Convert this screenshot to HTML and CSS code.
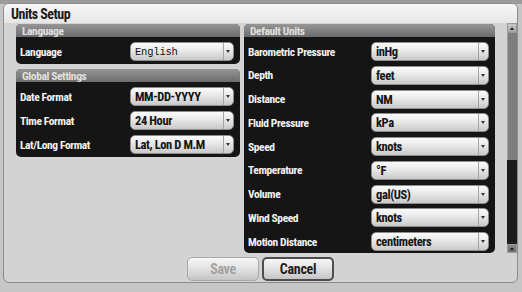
FILE: index.html
```html
<!DOCTYPE html>
<html lang="en">
<head>
  <meta charset="UTF-8" />
  <title>Units Setup</title>
  <link rel="stylesheet" href="styles.css">
</head>
<body>

  <div class="dialog">
    <div class="titlebar">Units Setup</div>

    <div class="content">
      <div class="col col-left">
        <section class="panel">
          <div class="panel-head">Language</div>
          <div class="panel-body">
            <div class="row">
              <span class="label">Language</span>
              <div class="select"><span class="value mono">English</span><span class="arrow"></span></div>
            </div>
          </div>
        </section>

        <section class="panel">
          <div class="panel-head">Global Settings</div>
          <div class="panel-body">
            <div class="row">
              <span class="label">Date Format</span>
              <div class="select"><span class="value">MM-DD-YYYY</span><span class="arrow"></span></div>
            </div>
            <div class="row">
              <span class="label">Time Format</span>
              <div class="select"><span class="value">24 Hour</span><span class="arrow"></span></div>
            </div>
            <div class="row">
              <span class="label">Lat/Long Format</span>
              <div class="select"><span class="value">Lat, Lon D M.M</span><span class="arrow"></span></div>
            </div>
          </div>
        </section>
      </div>

      <div class="col col-right">
        <section class="panel panel-units">
          <div class="panel-head">Default Units</div>
          <div class="panel-body">
            <div class="row">
              <span class="label">Barometric Pressure</span>
              <div class="select"><span class="value">inHg</span><span class="arrow"></span></div>
            </div>
            <div class="row">
              <span class="label">Depth</span>
              <div class="select"><span class="value">feet</span><span class="arrow"></span></div>
            </div>
            <div class="row">
              <span class="label">Distance</span>
              <div class="select"><span class="value">NM</span><span class="arrow"></span></div>
            </div>
            <div class="row">
              <span class="label">Fluid Pressure</span>
              <div class="select"><span class="value">kPa</span><span class="arrow"></span></div>
            </div>
            <div class="row">
              <span class="label">Speed</span>
              <div class="select"><span class="value">knots</span><span class="arrow"></span></div>
            </div>
            <div class="row">
              <span class="label">Temperature</span>
              <div class="select"><span class="value">°F</span><span class="arrow"></span></div>
            </div>
            <div class="row">
              <span class="label">Volume</span>
              <div class="select"><span class="value">gal(US)</span><span class="arrow"></span></div>
            </div>
            <div class="row">
              <span class="label">Wind Speed</span>
              <div class="select"><span class="value">knots</span><span class="arrow"></span></div>
            </div>
            <div class="row">
              <span class="label">Motion Distance</span>
              <div class="select"><span class="value">centimeters</span><span class="arrow"></span></div>
            </div>
          </div>
        </section>
      </div>

      <div class="scrollbar">
        <div class="sb-btn sb-up"></div>
        <div class="sb-thumb"></div>
        <div class="sb-track"></div>
        <div class="sb-btn sb-down"></div>
      </div>
    </div>

    <div class="buttons">
      <button class="btn" disabled>Save</button>
      <button class="btn btn-default">Cancel</button>
    </div>
  </div>

</body>
</html>
```

FILE: styles.css
```css
body {
  margin: 0;
  width: 522px;
  height: 292px;
  overflow: hidden;
  background: linear-gradient(#9c9c9c 0, #9c9c9c 4px, #c6c6c6 4px);
  font-family: "Roboto Condensed", "Open Sans", "Liberation Sans", sans-serif;
  font-stretch: condensed;
  font-weight: bold;
  letter-spacing: -0.4px;
}
.dialog {
  margin: 3px 4px 0 3px;
  width: 513px;
  border: 1px solid #8c8c8c;
  border-radius: 6px;
  background: #d3d3d3;
  overflow: hidden;
}
.titlebar {
  height: 19px;
  padding-left: 7px;
  background: linear-gradient(#f7f7f7, #e6e6e6);
  color: #1a1a1a;
  font-size: 14px;
  line-height: 20px;
  letter-spacing: -0.5px;
}
.content {
  display: flex;
  padding: 1px 0 0 12px;
}
.col {
  display: flex;
  flex-direction: column;
  gap: 5px;
}
.col-left {
  width: 224px;
  margin-right: 4px;
}
.col-right {
  width: 251px;
  margin-right: 12px;
}
.panel {
  border-radius: 5px;
  overflow: hidden;
  background: #151515;
}
.panel-head {
  height: 13px;
  padding-left: 6px;
  background: linear-gradient(#969696, #6c6c6c);
  color: #e0e0e0;
  font-size: 11.5px;
  line-height: 14px;
}
.panel-body {
  display: flex;
  flex-direction: column;
  gap: 5px;
  padding: 5px 6px 3px 4px;
}
.panel-units .panel-body {
  gap: 4.75px;
  padding-bottom: 2px;
}
.row {
  display: flex;
  justify-content: space-between;
  align-items: center;
  height: 19px;
}
.label {
  color: #f2f2f2;
  font-size: 11.5px;
}
.select {
  display: flex;
  align-items: center;
  width: 104px;
  height: 19px;
  box-sizing: border-box;
  border: 1px solid #8e8e8e;
  border-radius: 5px;
  background: linear-gradient(#fbfbfb, #e8e8e8 45%, #c9c9c9);
}
.panel-units .select {
  width: 118px;
}
.value {
  flex: 1;
  padding-left: 4px;
  color: #141414;
  font-size: 12.5px;
  white-space: nowrap;
}
.mono {
  font-family: "Liberation Mono", "DejaVu Sans Mono", monospace;
  font-stretch: normal;
  font-weight: normal;
  font-size: 10.5px;
  letter-spacing: -0.2px;
}
.arrow {
  position: relative;
  width: 9px;
  height: 17px;
  border-left: 1px solid #a4a4a4;
}
.arrow::after {
  content: "";
  position: absolute;
  left: 2px;
  top: 7px;
  border-left: 2.5px solid transparent;
  border-right: 2.5px solid transparent;
  border-top: 3px solid #333;
}
.scrollbar {
  display: flex;
  flex-direction: column;
  width: 10px;
  height: 230px;
  margin-top: -1px;
}
.sb-btn {
  position: relative;
  height: 10px;
  box-sizing: border-box;
  border: 1px solid #9a9a9a;
  background: linear-gradient(#c8c8c8, #a4a4a4);
}
.sb-down {
  height: 9px;
  background: linear-gradient(#8a8a8a, #6c6c6c);
}
.sb-btn::after {
  content: "";
  position: absolute;
  left: 2px;
  top: 3px;
  border-left: 2px solid transparent;
  border-right: 2px solid transparent;
}
.sb-up::after {
  border-bottom: 3px solid #222;
}
.sb-down::after {
  border-top: 3px solid #222;
}
.sb-thumb {
  height: 127px;
  box-sizing: border-box;
  border-left: 1px solid #a0a0a0;
  background: #7e7e7e;
}
.sb-track {
  flex: 1;
  background: #1c1c1c;
}
.buttons {
  display: flex;
  justify-content: center;
  gap: 3px;
  padding: 4px 0 1px;
}
.btn {
  width: 72px;
  height: 24px;
  border: 1px solid #a8a8a8;
  border-radius: 5px;
  background: linear-gradient(#f6f6f6, #e2e2e2 50%, #c4c4c4);
  font-family: inherit;
  font-stretch: condensed;
  font-weight: bold;
  font-size: 14px;
  letter-spacing: -0.3px;
  color: #1e1e1e;
}
.btn:disabled {
  color: #a2a2a2;
}
.btn-default {
  border: 2px solid #4e4e4e;
}
```
